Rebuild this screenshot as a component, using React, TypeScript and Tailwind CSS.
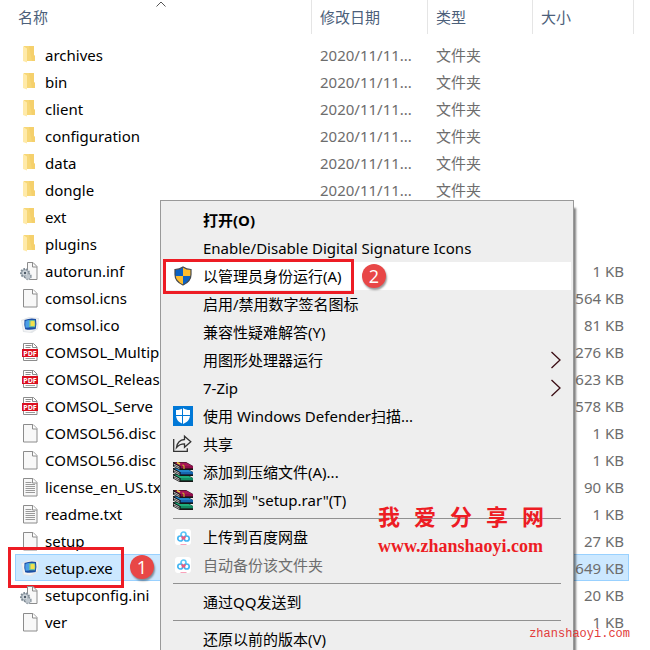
import type { ReactNode } from "react"

type FileKind = "folder" | "blank" | "config" | "image" | "pdf" | "text"

interface FileEntry {
  name: string
  kind: FileKind
  date?: string
  type?: string
  size?: string
  selected?: boolean
}

const folder = (name: string): FileEntry => ({ name, kind: "folder", date: "2020/11/11...", type: "文件夹" })

const files: FileEntry[] = [
  folder("archives"),
  folder("bin"),
  folder("client"),
  folder("configuration"),
  folder("data"),
  folder("dongle"),
  { name: "ext", kind: "folder" },
  { name: "plugins", kind: "folder" },
  { name: "autorun.inf", kind: "config", size: "1 KB" },
  { name: "comsol.icns", kind: "blank", size: "564 KB" },
  { name: "comsol.ico", kind: "image", size: "81 KB" },
  { name: "COMSOL_Multip", kind: "pdf", size: "276 KB" },
  { name: "COMSOL_Releas", kind: "pdf", size: "623 KB" },
  { name: "COMSOL_Serve", kind: "pdf", size: "578 KB" },
  { name: "COMSOL56.disc", kind: "blank", size: "1 KB" },
  { name: "COMSOL56.disc", kind: "blank", size: "1 KB" },
  { name: "license_en_US.tx", kind: "text", size: "90 KB" },
  { name: "readme.txt", kind: "text", size: "1 KB" },
  { name: "setup", kind: "blank", size: "27 KB" },
  { name: "setup.exe", kind: "image", size: "649 KB", selected: true },
  { name: "setupconfig.ini", kind: "config", size: "20 KB" },
  { name: "ver", kind: "blank", size: "1 KB" },
]

function Page() {
  return (
    <>
      <path d="M3.5 1.5h9.5l4 4v13.500h-13.500z" fill="#f8f8f8" stroke="#8c8c8c" />
      <path d="M12.500 1.500v4.500h4.500" fill="#fff" stroke="#8c8c8c" />
    </>
  )
}

function FileIcon({ kind }: { kind: FileKind }) {
  return (
    <svg className="size-5 shrink-0" viewBox="0 0 20 20" aria-hidden="true">
      {kind === "folder" && (
        <>
          <path d="M4 1h10v9.500h1v5.500H4z" fill="#f7d777" />
          <path d="M9 1h5v9.500h1v5.500h-3z" fill="#f3cc66" opacity="0.6" />
          <path d="M3 1l4 2.500v14L3 16z" fill="#ffeaa9" />
        </>
      )}
      {kind === "blank" && <Page />}
      {kind === "text" && (
        <>
          <Page />
          <path d="M5.500 5.500h6M5.500 7.500h9.500M5.500 9.500h9.500M5.500 11.500h9.500M5.500 13.500h9.500M5.500 15.500h9.500" stroke="#9a9a9a" />
        </>
      )}
      {kind === "config" && (
        <>
          <path d="M7 1.500h6l4 4v13h-10z" fill="#f8f8f8" />
          <path d="M7.500 9V1.500h5.500l4 4v13h-7M12.500 1.500v4.500h4.500" fill="none" stroke="#8c8c8c" />
          <circle cx="5" cy="12" r="4" fill="#aab4bd" stroke="#7f8b95" strokeWidth="2" strokeDasharray="1.600 1.200" />
          <circle cx="8" cy="15.500" r="3" fill="#c0c8cf" stroke="#8c97a0" strokeWidth="1.500" strokeDasharray="1.400 1" />
          <circle cx="5" cy="12" r="2.500" fill="#d5dbe0" />
          <circle cx="5" cy="12" r="1.200" fill="#4e5c68" />
        </>
      )}
      {kind === "image" && (
        <>
          <path d="M1 5L9 2l10 1-1 11-6 4-9-1z" fill="#e3e6e9" />
          <path d="M2 6l7-3 9 1-1 9-7 4-6-1z" fill="#f3f4f5" />
          <path d="M4.500 5q6-2.500 11.500-1 1 5-.3 10-6 1.500-10.500.3Q3.800 9.500 4.500 5z" fill="#1b4fa6" />
          <path d="M5.500 6q2-1 3.500-1v7.500l-3.500.3q-.6-3.500 0-6.800z" fill="#4b9fe6" />
          <path d="M9 5.300q4-.6 6 0 .6 3.500 0 7h-6z" fill="#6cc0a0" />
          <path d="M10.500 6.300q2.500-.4 4 0 .4 2.500 0 4.700h-4z" fill="#f5e04a" />
        </>
      )}
      {kind === "pdf" && (
        <>
          <path d="M3.500 1.500h10l3.500 3.500v13.500h-13.500z" fill="#fff" stroke="#8c8c8c" />
          <path d="M12.500 1.500v4h4.500M5.500 3.500h6M5.500 5.500h5" fill="none" stroke="#8c8c8c" />
          <rect x="2" y="7" width="16" height="8" fill="#db1021" />
          <path d="M5.500 16.500h9.500" stroke="#9a9a9a" />
          <text x="10" y="13.500" textAnchor="middle" fontFamily="Open Sans, sans-serif" fontSize="7" fontWeight="700" fill="#fff">
            PDF
          </text>
        </>
      )}
    </svg>
  )
}

function ShieldIcon() {
  return (
    <svg className="size-5" viewBox="0 0 20 20" aria-hidden="true">
      <clipPath id="uac">
        <path d="M10 1c2.500 1.800 5 2.500 8 2.500v5c0 5-3.500 8.500-8 10.500-4.500-2-8-5.500-8-10.500v-5c3 0 5.500-.7 8-2.500z" />
      </clipPath>
      <g clipPath="url(#uac)">
        <path d="M0 0h10v10H0zM10 10h10v10H10z" fill="#0b62c4" />
        <path d="M10 0h10v10H10zM0 10h10v10H0z" fill="#fdbd2f" />
      </g>
      <path d="M10 1c2.500 1.800 5 2.500 8 2.500v5c0 5-3.500 8.500-8 10.500-4.500-2-8-5.500-8-10.500v-5c3 0 5.500-.7 8-2.500z" fill="none" stroke="#45494d" strokeWidth="1.200" />
    </svg>
  )
}

function DefenderIcon() {
  return (
    <svg className="size-5" viewBox="0 0 20 20" aria-hidden="true">
      <path d="M0 0h20v20H0z" fill="#0078d7" />
      <path d="M10 2c2 1.500 4 2 7 2v5c0 4.500-3 7.500-7 9-4-1.500-7-4.500-7-9V4c3 0 5-.5 7-2z" fill="#fff" />
      <path d="M9.500 1v18M2 9.500h16" stroke="#0078d7" />
    </svg>
  )
}

function ShareIcon() {
  return (
    <svg className="size-5" viewBox="0 0 20 20" fill="none" stroke="#333" strokeWidth="1.300" aria-hidden="true">
      <path d="M.7 5v12.300h13.600v-3" />
      <path d="M3.500 13.500c.8-5 3.500-7.700 8-8V2.200l6.300 5.600-6.300 5.500v-3.500c-3.500 0-5.800 1-8 3.700z" />
    </svg>
  )
}

function Book({ y, color, dark }: { y: number; color: string; dark: string }) {
  return (
    <g transform={`translate(0 ${y})`}>
      <path d="M0 0h13l7 4v4H6.500L0 4.500z" fill="#161616" />
      <path d="M1 .5h12l6.500 3.500H7z" fill={color} />
      <path d="M7.500 4H20v2.500H7.500z" fill={dark} />
      <path d="M8 4.500h12v1H8z" fill={color} />
      <path d="M.5 2l6 3.200M1 3.800l5.500 3" stroke="#e4e4e4" strokeWidth=".8" />
    </g>
  )
}

function RarIcon() {
  return (
    <svg className="size-5" viewBox="0 0 20 20" aria-hidden="true">
      <Book y={12} color="#1fae7c" dark="#0a6b48" />
      <Book y={6} color="#2388cc" dark="#0a4590" />
      <Book y={0} color="#a81558" dark="#76083c" />
      <path d="M4 .5l3 1.500" stroke="#e6d640" strokeWidth="1.500" />
      <path d="M9.500 2.800l1.500 1.200v3" stroke="#c7a92a" strokeWidth="1.200" fill="none" />
    </svg>
  )
}

function CloudIcon() {
  return (
    <svg className="size-5" viewBox="0 0 20 20" fill="none" aria-hidden="true">
      <rect x="2" y="2" width="16" height="16" rx="3" fill="#fff" />
      <circle cx="10.500" cy="7.500" r="2.500" stroke="#5cc6f7" strokeWidth="1.700" />
      <circle cx="7.300" cy="11.500" r="2.500" stroke="#45b6f3" strokeWidth="1.700" />
      <circle cx="13.700" cy="11.500" r="2.500" stroke="#45b6f3" strokeWidth="1.700" />
      <path d="M8.500 9.300l3.500 3M12.500 9.300l-3.500 3" stroke="#f4587a" strokeWidth="1.700" />
      <path d="M7.500 17.500h6" stroke="#f9a3bb" />
    </svg>
  )
}

interface MenuItemProps {
  label: string
  icon?: ReactNode
  bold?: boolean
  active?: boolean
  disabled?: boolean
  submenu?: boolean
  children?: ReactNode
}

function MenuItem({ label, icon, bold, active, disabled, submenu, children }: MenuItemProps) {
  return (
    <button
      type="button"
      role="menuitem"
      disabled={disabled}
      className={`relative flex h-7 w-full items-center gap-2.5 px-2.5 text-left whitespace-nowrap ${active ? "bg-white" : ""} ${bold ? "font-bold" : ""} ${disabled ? "text-[#6d6d6d]" : "text-black"}`}
    >
      <span className="size-5 shrink-0">{icon}</span>
      <span className="flex-1">{label}</span>
      {submenu && (
        <svg className="h-[18px] w-2.5" viewBox="0 0 10 18" fill="none" aria-hidden="true">
          <path d="M.500 1l8.500 8-8.500 8" stroke="#3b0d14" strokeWidth="1.300" />
        </svg>
      )}
      {children}
    </button>
  )
}

function Separator() {
  return <hr className="mx-2.5 my-1 border-t border-[#919191]" />
}

function Badge({ children }: { children: ReactNode }) {
  return (
    <span className="flex size-6 items-center justify-center rounded-full bg-[#e84747] font-['Open_Sans',sans-serif] text-lg leading-6 font-normal text-white shadow-[1px_2px_2px_rgba(0,0,0,0.4)]">
      {children}
    </span>
  )
}

function ContextMenu() {
  return (
    <div
      role="menu"
      className="absolute top-[200px] left-40 w-[414px] border border-[#999] bg-[#eee] px-0.5 py-[5px] shadow-[3px_7px_2px_-1px_rgba(0,0,0,0.5)]"
    >
      <MenuItem label="打开(O)" bold />
      <MenuItem label="Enable/Disable Digital Signature Icons" />
      <MenuItem label="以管理员身份运行(A)" icon={<ShieldIcon />} active>
        <span className="absolute -top-[3px] left-0 h-[35px] w-[191px] border-3 border-[#ed1c24]" />
        <span className="absolute top-0.5 left-[199px]">
          <Badge>2</Badge>
        </span>
      </MenuItem>
      <MenuItem label="启用/禁用数字签名图标" />
      <MenuItem label="兼容性疑难解答(Y)" />
      <MenuItem label="用图形处理器运行" submenu />
      <MenuItem label="7-Zip" submenu />
      <MenuItem label="使用 Windows Defender扫描..." icon={<DefenderIcon />} />
      <MenuItem label="共享" icon={<ShareIcon />} />
      <MenuItem label="添加到压缩文件(A)..." icon={<RarIcon />} />
      <MenuItem label={'添加到 "setup.rar"(T)'} icon={<RarIcon />} />
      <Separator />
      <MenuItem label="上传到百度网盘" icon={<CloudIcon />} />
      <MenuItem label="自动备份该文件夹" icon={<CloudIcon />} disabled />
      <Separator />
      <MenuItem label="通过QQ发送到" />
      <Separator />
      <MenuItem label="还原以前的版本(V)" />
    </div>
  )
}

function FileRow({ file }: { file: FileEntry }) {
  const cell = file.selected ? "border-y border-[#99d1ff] bg-[#cce8ff]" : "border-y border-transparent"

  return (
    <tr className="h-[27px] text-[#6d6d6d]">
      <td className={`${cell} border-l p-0`}>
        <div className="relative flex h-[25px] items-center gap-[5px] pl-1 text-black">
          <FileIcon kind={file.kind} />
          <span>{file.name}</span>
          {file.selected && (
            <>
              <span className="absolute -top-2 -left-2 h-[41px] w-[116px] border-3 border-[#ed1c24]" />
              <span className="absolute top-0 left-[114px]">
                <Badge>1</Badge>
              </span>
            </>
          )}
        </div>
      </td>
      <td className={`${cell} p-0 pl-2`}>{file.date}</td>
      <td className={`${cell} p-0 pl-2`}>{file.type}</td>
      <td className={`${cell} border-r p-0 pr-1 text-right`}>{file.size}</td>
      <td className="p-0" />
    </tr>
  )
}

export default function App() {
  return (
    <main className="relative h-screen overflow-hidden bg-white pr-4 pl-[15px] font-['Noto_Sans','Noto_Sans_CJK_SC',sans-serif] text-[15px] leading-5">
      <table className="w-full table-fixed border-separate border-spacing-0 whitespace-nowrap">
        <colgroup>
          <col />
          <col className="w-[116px]" />
          <col className="w-[105px]" />
          <col className="w-[96px]" />
          <col className="w-[5px]" />
        </colgroup>
        <thead>
          <tr className="h-[34px] text-left text-[#4c607a]">
            <th className="relative border-r border-[#e5e5e5] p-0 pl-[3px] font-normal">
              名称
              <svg className="absolute top-px left-[141px] h-1.5 w-2.5" viewBox="0 0 10 6" fill="none" aria-hidden="true">
                <path d="M.500 5.500l4.500-4.500 4.500 4.500" stroke="#555" />
              </svg>
            </th>
            <th className="border-r border-[#e5e5e5] p-0 pl-2 font-normal">修改日期</th>
            <th className="border-r border-[#e5e5e5] p-0 pl-2 font-normal">类型</th>
            <th className="p-0 pl-2 font-normal">大小</th>
            <td className="border-r border-[#e5e5e5] p-0" />
          </tr>
        </thead>
        <tbody>
          <tr className="h-[7px]">
            <td colSpan={5} className="p-0" />
          </tr>
          {files.map((file, index) => (
            <FileRow key={index} file={file} />
          ))}
        </tbody>
      </table>

      <ContextMenu />

      <div className="absolute top-[504px] left-[378px] text-[#ed1c24]">
        <p className="flex gap-3.5 text-[22px] leading-6 font-bold">
          {["我", "爱", "分", "享", "网"].map((char) => (
            <span key={char}>{char}</span>
          ))}
        </p>
        <p className="mt-2 font-['Liberation_Serif',serif] text-lg leading-5 font-bold">www.zhanshaoyi.com</p>
      </div>
      <p className="absolute right-5 bottom-1.5 font-['Liberation_Mono',monospace] text-xs leading-5 text-[#e23b3b]">zhanshaoyi.com</p>
    </main>
  )
}
